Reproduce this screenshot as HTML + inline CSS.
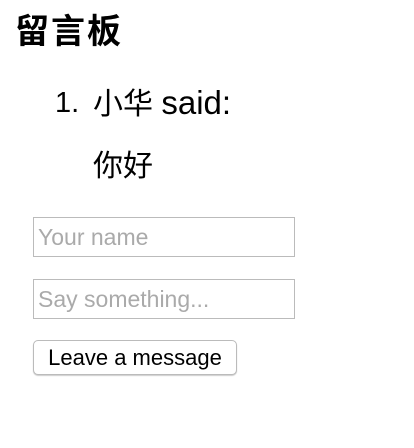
<!DOCTYPE html>
<html><head><meta charset="utf-8"><style>
html,body{margin:0;padding:0;background:#fff;width:414px;height:448px;overflow:hidden}
body{font-family:"Liberation Sans","Noto Sans CJK SC",sans-serif;color:#000;position:relative}
.a{position:absolute;white-space:nowrap}
.h{left:15px;top:12px;font-size:34px;font-weight:bold;line-height:40px;letter-spacing:2px}
.n{left:55px;top:84px;font-size:29px;line-height:38px}
.n2{left:93px;top:84px;font-size:30px;line-height:38px}
.m{left:93px;top:148px;font-size:30px;line-height:38px}
.in{left:33px;border:1px solid #bbb;font-size:23px;color:#aaa;line-height:38px;padding-left:4px;box-sizing:border-box;width:262px;height:40px}
.b{left:33px;top:340px;width:204px;height:35px;border:1px solid #bbb;border-radius:5px;box-sizing:border-box;font-size:22px;line-height:33px;text-align:center;box-shadow:0 1px 1px #ccc;background:#fff}
</style></head><body>
<div class="a h">留言板</div>
<div class="a n">1.</div>
<div class="a n2">小华 <span style="font-size:33px">said:</span></div>
<div class="a m">你好</div>
<div class="a in" style="top:217px">Your name</div>
<div class="a in" style="top:279px">Say something...</div>
<div class="a b">Leave a message</div>
</body></html>
